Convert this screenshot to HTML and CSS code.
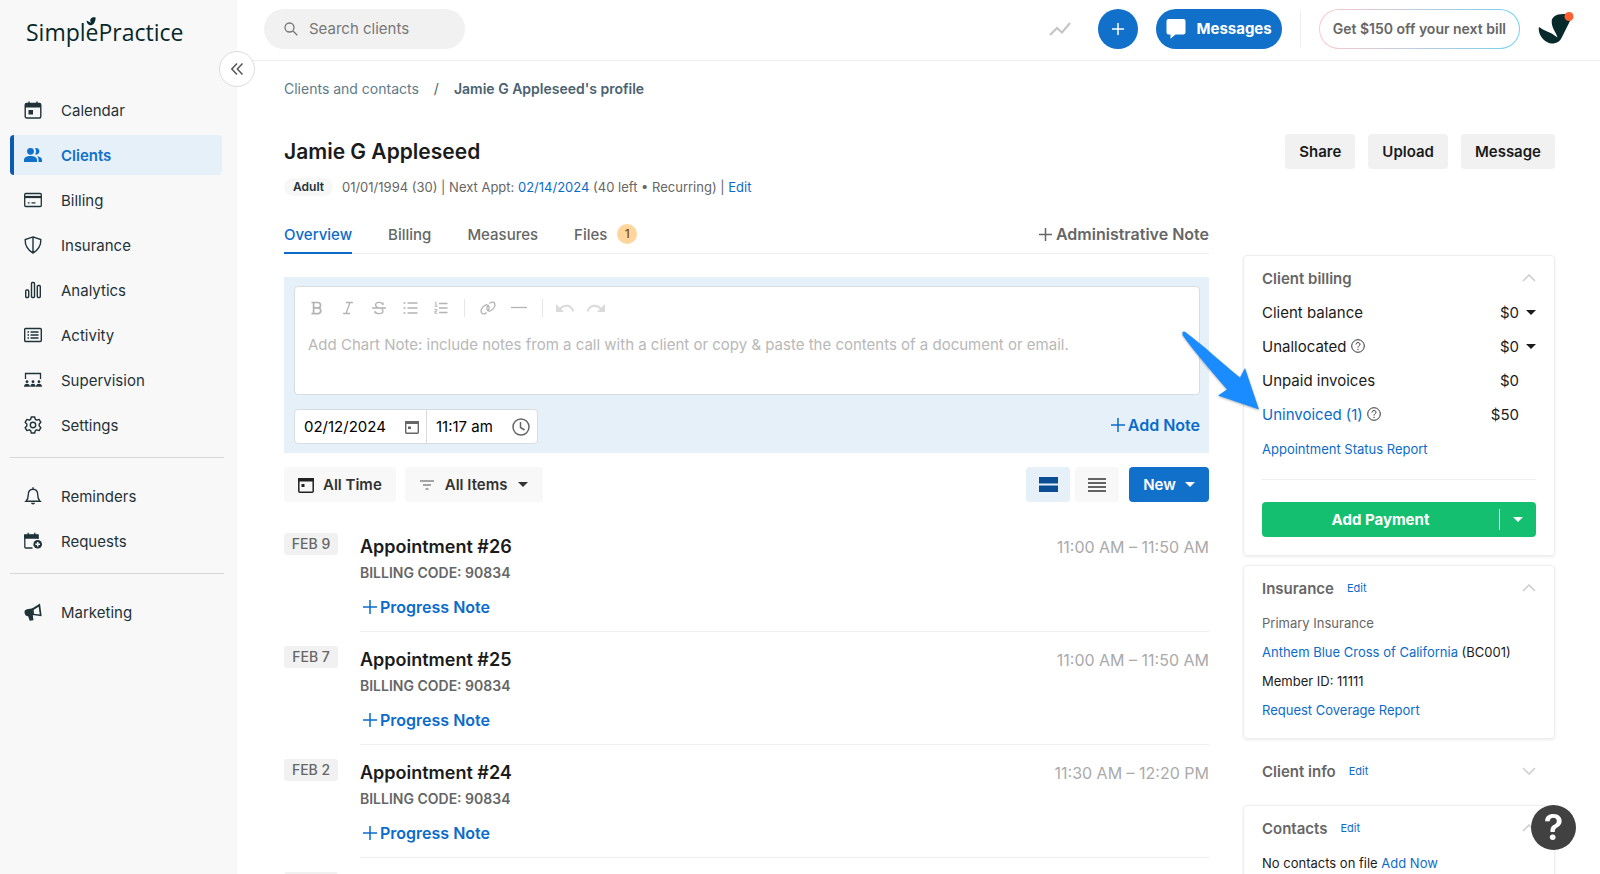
FILE: index.html
```html
<!DOCTYPE html>
<html lang="en">
<head>
<meta charset="utf-8">
<title>Jamie G Appleseed's profile</title>
<link rel="stylesheet" href="styles.css">
</head>
<body>
<div class="app">
  <aside class="sidebar">
    <a class="logo" href="#" aria-label="SimplePractice"><span>SimplePractice</span>
      <svg class="logo-bird" viewBox="0 0 10 11"><path d="M5 1.5C6 .3 8 0 9.6 .5C9.800 4 8 7.500 5.500 8.200C3 8.800 1 7 .5 3.800C2 4.200 4 5 5 6C4 4 4 2.500 5 1.500Z" fill="#06292b"/></svg>
    </a>
    <button class="collapse" aria-label="Collapse menu"><svg width="14" height="14" viewBox="0 0 14 14" fill="none" stroke="#555" stroke-width="1.5"><path d="M7 1.500 1.800 7 7 12.500M12.500 1.500 7.300 7l5.200 5.500"/></svg></button>
    <nav class="nav">
      <a href="#"><svg viewBox="0 0 18 18" fill="none" stroke="currentColor" stroke-width="1.400"><rect x="1.200" y="2.500" width="15.600" height="14.500" rx="1.500"/><path d="M1 3h16v3.500H1z" fill="currentColor" stroke="none"/><path d="M5 .5v3M13 .5v3"/><path d="M4.500 9h4.500v4.500H4.500z" fill="currentColor" stroke="none"/></svg>Calendar</a>
      <a href="#" class="active"><svg viewBox="0 0 18 18" fill="currentColor"><circle cx="6.500" cy="5.300" r="3.400"/><path d="M0 16v-2.200C0 11.300 3 10 6.500 10s6.500 1.300 6.500 3.800V16z"/><path d="M11 2.200a3.300 3.300 0 1 1 0 6.200c1.400-1.800 1.400-4.400 0-6.200zM13 10.200c3 .3 5 1.600 5 3.800v2h-3.500v-2.200c0-1.500-.5-2.700-1.500-3.600z"/></svg>Clients</a>
      <a href="#"><svg viewBox="0 0 18 18" fill="none" stroke="currentColor" stroke-width="1.300"><rect x=".7" y="2.500" width="16.600" height="13" rx="1"/><path d="M1 6h16" stroke-width="2.200"/><path d="M3.800 11.800h1.800M7.500 11.800h4"/></svg>Billing</a>
      <a href="#"><svg viewBox="0 0 18 18" fill="none" stroke="currentColor" stroke-width="1.400"><path d="M9 .9 16.800 3.600C17.200 9 14 14.600 9 17 4 14.600.8 9 1.200 3.600zM9 1v16"/></svg>Insurance</a>
      <a href="#"><svg viewBox="0 0 18 18" fill="none" stroke="currentColor" stroke-width="1.400"><rect x="1.700" y="9" width="3" height="7.500" rx="1"/><rect x="7.500" y="1.500" width="3" height="15" rx="1"/><rect x="13.300" y="4.500" width="3" height="12" rx="1"/></svg>Analytics</a>
      <a href="#"><svg viewBox="0 0 18 18" fill="none" stroke="currentColor" stroke-width="1.400"><rect x=".7" y="2.500" width="16.600" height="13" rx="1"/><path d="M3.500 6h1.500M3.500 9h1.500M3.500 12h1.500M6.500 6h8M6.500 9h8M6.500 12h8"/></svg>Activity</a>
      <a href="#"><svg viewBox="0 0 18 18" fill="currentColor"><path d="M1.500 8V2.500h15V8" fill="none" stroke="currentColor" stroke-width="1.300"/><circle cx="3" cy="10.700" r="1.400"/><circle cx="9" cy="10.700" r="1.400"/><circle cx="15" cy="10.700" r="1.400"/><path d="M0 15.800c0-2 1.200-3 3-3s3 1 3 3zM6.300 15.800c0-2 1-3 2.700-3s2.700 1 2.700 3zM12 15.800c0-2 1.200-3 3-3s3 1 3 3z"/></svg>Supervision</a>
      <a href="#"><svg viewBox="0 0 18 18" fill="none" stroke="currentColor" stroke-width="1.400" stroke-linejoin="round"><path d="M7.300 1h3.400l.6 2.300 1.500.9 2.300-.8 1.800 2.900-1.700 1.700v2l1.700 1.700-1.800 2.900-2.300-.8-1.500.9-.6 2.300H7.300l-.6-2.300-1.500-.9-2.300.8-1.800-2.900L2.800 10V8L1.100 6.300l1.800-2.900 2.300.8 1.500-.9z"/><circle cx="9" cy="9" r="2.700"/></svg>Settings</a>
      <hr>
      <a href="#"><svg viewBox="0 0 18 18" fill="none" stroke="currentColor" stroke-width="1.400"><path d="M2 14.300c1.800-1.600 2.200-3.300 2.200-6C4.200 4.500 6 2.200 9 2.200s4.800 2.300 4.800 6.100c0 2.700.4 4.400 2.200 6zM9 .3v2"/><path d="M7 15.800a2 1.800 0 0 0 4 0z" fill="currentColor" stroke="none"/></svg>Reminders</a>
      <a href="#"><svg viewBox="0 0 18 18" fill="none" stroke="currentColor" stroke-width="1.300"><path d="M8.500 16H2.200Q.8 16 .8 14.700V3.500h13V7"/><path d="M.8 3h13.200v3H.8z" fill="currentColor"/><path d="M4.200.8v3M10.800.8v3"/><circle cx="13.700" cy="12.300" r="4.300" fill="currentColor" stroke="none"/><path d="M13.700 10v4.600M11.400 12.300H16" stroke="#f8f8f8" stroke-width="1.500"/></svg>Requests</a>
      <hr>
      <a href="#"><svg viewBox="0 0 18 18" fill="currentColor"><path d="M8 5.500 16 .5l1.700 12.800L8.500 12zM9.500 7l.4 3.800 5.900.8-1.200-7.900z" fill-rule="evenodd"/><path d="M.5 9.500C.3 8 1.500 6.500 3 6.300l6-1 .8 6.800-1 .2.700 5-3.800.4-1.600-4.500c-2 0-3.300-1.500-3.600-3.700z"/></svg>Marketing</a>
    </nav>
  </aside>

  <div class="page">
    <header class="topbar">
      <label class="search"><svg width="14" height="14" viewBox="0 0 14 14" fill="none" stroke="#777" stroke-width="1.300"><circle cx="5.500" cy="5.500" r="4.500"/><path d="m9 9 4.300 4.300"/></svg><input type="text" placeholder="Search clients" aria-label="Search clients"></label>
      <div class="top-actions">
        <svg class="trend" width="22" height="16" viewBox="0 0 22 16" fill="none" stroke="#c4c4c4" stroke-width="2"><path d="m1 14 7-7 5 4.500L21 2"/></svg>
        <button class="add" aria-label="Create"><svg width="14" height="14" viewBox="0 0 14 14" stroke="#fff" stroke-width="1.500"><path d="M7 1v12M1 7h12"/></svg></button>
        <button class="messages"><svg width="20" height="20" viewBox="0 0 20 20" fill="#fff"><path d="M2.500 0h15Q19.500 0 19.500 2v11.500q0 2-2 2h-8L4.500 19.800v-4.300H2.500q-2 0-2-2V2q0-2 2-2z"/></svg>Messages</button>
        <span class="top-sep"></span>
        <button class="promo">Get $150 off your next bill</button>
        <button class="avatar" aria-label="Account"><svg width="36" height="34" viewBox="0 0 36 34"><path d="M27 2C18 1.500 13.500 5 13.700 10C14 17 18 20 19.500 25.500C13 20 6 19 2 15.500Q.5 14.500 .7 17C1 25 8 31.500 14 31.500C19 31.500 22 29 23.500 26L33 7Z" fill="#06292b"/><circle cx="31" cy="4.500" r="4.500" fill="#ff5f2e"/></svg></button>
      </div>
    </header>

    <main class="content">
      <div class="crumbs"><a href="#">Clients and contacts</a><span>/</span><strong>Jamie G Appleseed's profile</strong></div>
      <div class="heading">
        <h1>Jamie G Appleseed</h1>
        <div class="heading-actions"><button>Share</button><button>Upload</button><button>Message</button></div>
      </div>
      <div class="meta"><span class="pill">Adult</span><span>01/01/1994 (30) | Next Appt: <a href="#">02/14/2024</a> (40 left • Recurring) | <a href="#">Edit</a></span></div>

      <div class="columns">
        <section class="primary">
          <div class="tabs">
            <a href="#" class="on">Overview</a><a href="#">Billing</a><a href="#">Measures</a><a href="#">Files<span class="badge">1</span></a>
            <button class="admin"><svg width="13" height="13" viewBox="0 0 13 13" stroke="currentColor" stroke-width="1.500"><path d="M6.500 0v13M0 6.500h13"/></svg>Administrative Note</button>
          </div>

          <div class="composer">
            <div class="editor">
              <div class="tools">
                <button aria-label="Bold"><svg viewBox="0 0 16 16"><path d="M2.500 2.500h6.300a2.700 2.700 0 0 1 0 5.400H4.500m4.300 0h.6a2.900 2.900 0 0 1 0 5.700H2.500M4.600 2.500v11" stroke-width="1.700"/></svg></button>
                <button aria-label="Italic"><svg viewBox="0 0 16 16"><path d="M6 2.500h7M3 13.500h7M10 2.500l-4 11"/></svg></button>
                <button aria-label="Strikethrough"><svg viewBox="0 0 16 16"><path d="M12 5V2.500M12 4.500C11 1.500 4.500 1.500 4.500 5c0 1.500 1.500 2.300 3.500 3M4 11v2.500M4 11.500c1 3 8 3 8-.5 0-1-.5-2-1.500-2.500M1 8h14"/></svg></button>
                <button aria-label="Bulleted list"><svg viewBox="0 0 16 16"><path d="M1.500 3h2M1.500 8h2M1.500 13h2M5.500 3h10M5.500 8h10M5.500 13h10"/></svg></button>
                <button aria-label="Numbered list"><svg viewBox="0 0 16 16"><path d="M6 3.500h8.500M6 8h8.500M6 12.500h8.500"/><path d="M2 3l1-.8V6M1.500 6.200h3M1.700 9.500h2.200v1.700H1.900v2h2.500" stroke-width="1"/></svg></button>
                <span class="tool-sep"></span>
                <button aria-label="Link"><svg viewBox="0 0 16 16"><path d="M6.500 12.500C4.500 15 1 14 1 11c0-2.500 3.500-6.500 6-6 2.500.4 2.500 3 1.500 5M9.500 3.500C11.500 1 15 2 15 5c0 2.500-3.500 6.500-6 6-2.500-.4-2.500-3-1.500-5"/></svg></button>
                <button aria-label="Horizontal rule"><svg viewBox="0 0 16 16"><path d="M0 7.500h16"/></svg></button>
                <span class="tool-sep"></span>
                <button class="dim" aria-label="Undo"><svg viewBox="0 0 18 16"><path d="M4 9c4-5 11-4.500 13.500 2.500" stroke-width="2"/><path d="M0 4v8h8z" fill="currentColor" stroke="none"/></svg></button>
                <button class="dim" aria-label="Redo"><svg viewBox="0 0 18 16"><path d="M14 9C10 4 3 4.500.5 11.500" stroke-width="2"/><path d="M18 4v8h-8z" fill="currentColor" stroke="none"/></svg></button>
              </div>
              <textarea aria-label="Chart note" rows="3" placeholder="Add Chart Note: include notes from a call with a client or copy &amp; paste the contents of a document or email."></textarea>
            </div>
            <div class="composer-foot">
              <div class="when">
                <label class="date"><input type="text" value="02/12/2024" aria-label="Date"><svg width="14" height="14" viewBox="0 0 14 14"><rect x=".7" y="1.700" width="12.600" height="11.600" rx="1" fill="none" stroke="#666" stroke-width="1.400"/><path d="M0 1h14v3H0zM3 6.500h3v2.500H3z" fill="#666"/></svg></label>
                <label class="time"><input type="text" value="11:17 am" aria-label="Time"><svg width="18" height="18" viewBox="0 0 18 18" fill="none" stroke="#666" stroke-width="1.500"><circle cx="9" cy="9" r="8"/><path d="M8.500 4v5.500l4 2.500"/></svg></label>
              </div>
              <button class="plus-link"><svg width="14" height="14" viewBox="0 0 14 14" stroke="currentColor" stroke-width="1.500"><path d="M7 0v14M0 7h14"/></svg>Add Note</button>
            </div>
          </div>

          <div class="filters">
            <button class="f-time"><svg width="16" height="16" viewBox="0 0 16 16"><rect x=".8" y="1.800" width="14.400" height="13.400" rx="1" fill="none" stroke="#222" stroke-width="1.500"/><path d="M0 1h16v3.500H0zM3.500 7h3v3h-3z" fill="#222"/></svg>All Time</button>
            <button class="f-items"><svg width="14" height="10" viewBox="0 0 14 10" stroke="#888" stroke-width="1.300"><path d="M0 1h14M3 5h8M5.500 9h3"/></svg>All Items<i class="caret"></i></button>
            <button class="view on" aria-label="Expanded view"><svg width="19" height="15" viewBox="0 0 19 15" fill="#0a4d94"><path d="M0 0h19v6.500H0zM0 8.500h19V15H0z"/></svg></button>
            <button class="view" aria-label="Compact view"><svg width="18" height="14" viewBox="0 0 18 14" stroke="#333" stroke-width="1.600"><path d="M0 1h18M0 5h18M0 9h18M0 13h18"/></svg></button>
            <button class="new">New<i class="caret"></i></button>
          </div>

          <ol class="timeline">
            <li><time>FEB 9</time><article><div class="row"><h2>Appointment #26</h2><span>11:00 AM – 11:50 AM</span></div><p>BILLING CODE: 90834</p><button class="plus-link"><svg width="14" height="14" viewBox="0 0 14 14" stroke="currentColor" stroke-width="1.500"><path d="M7 0v14M0 7h14"/></svg>Progress Note</button></article></li>
            <li><time>FEB 7</time><article><div class="row"><h2>Appointment #25</h2><span>11:00 AM – 11:50 AM</span></div><p>BILLING CODE: 90834</p><button class="plus-link"><svg width="14" height="14" viewBox="0 0 14 14" stroke="currentColor" stroke-width="1.500"><path d="M7 0v14M0 7h14"/></svg>Progress Note</button></article></li>
            <li><time>FEB 2</time><article><div class="row"><h2>Appointment #24</h2><span>11:30 AM – 12:20 PM</span></div><p>BILLING CODE: 90834</p><button class="plus-link"><svg width="14" height="14" viewBox="0 0 14 14" stroke="currentColor" stroke-width="1.500"><path d="M7 0v14M0 7h14"/></svg>Progress Note</button></article></li>
            <li><time>&nbsp;</time></li>
          </ol>
        </section>

        <aside class="side">
          <section class="card">
            <header><h3>Client billing</h3><svg class="chev" viewBox="0 0 14 8"><path d="m1 7 6-6 6 6"/></svg></header>
            <dl class="bill">
              <div><dt>Client balance</dt><dd>$0<i class="caret"></i></dd></div>
              <div><dt>Unallocated <svg class="q" viewBox="0 0 14 14"><circle cx="7" cy="7" r="6.300"/><path d="M5 5.500C5 2.800 9 3 9 5.300 9 6.700 7 6.700 7 8.500M7 9.800V11"/></svg></dt><dd>$0<i class="caret"></i></dd></div>
              <div><dt>Unpaid invoices</dt><dd>$0</dd></div>
              <div><dt><a href="#">Uninvoiced (1)</a> <svg class="q" viewBox="0 0 14 14"><circle cx="7" cy="7" r="6.300"/><path d="M5 5.500C5 2.800 9 3 9 5.300 9 6.700 7 6.700 7 8.500M7 9.800V11"/></svg></dt><dd>$50</dd></div>
            </dl>
            <a class="report" href="#">Appointment Status Report</a>
            <div class="pay"><button class="pay-main">Add Payment</button><button class="pay-more" aria-label="More payment options"><i class="caret"></i></button></div>
          </section>

          <section class="card insurance">
            <header><h3>Insurance</h3><a href="#">Edit</a><svg class="chev" viewBox="0 0 14 8"><path d="m1 7 6-6 6 6"/></svg></header>
            <p class="muted">Primary Insurance</p>
            <p><a href="#">Anthem Blue Cross of California</a> (BC001)</p>
            <p>Member ID: 11111</p>
            <p><a href="#">Request Coverage Report</a></p>
          </section>

          <section class="flat">
            <header><h3>Client info</h3><a href="#">Edit</a><svg class="chev" viewBox="0 0 14 8"><path d="m1 1 6 6 6-6"/></svg></header>
          </section>

          <section class="card contacts">
            <header><h3>Contacts</h3><a href="#">Edit</a><svg class="chev" viewBox="0 0 14 8"><path d="m1 7 6-6 6 6"/></svg></header>
            <p>No contacts on file <a href="#">Add Now</a></p>
          </section>
          <svg class="pointer" width="84" height="84" viewBox="0 0 84 84"><path d="M2.500 2C3.500 1 5 1.500 6 2.500C24 16 42 33 60 47.500L65 38 79 79.500 38 65.500 47 59.500C32 42 13 20 2.500 5Z" fill="#1a8cff"/></svg>
        </aside>
      </div>
    </main>
  </div>
  <button class="help" aria-label="Help">?</button>
</div>
</body>
</html>
```

FILE: styles.css
```css
* { box-sizing: border-box; }
body { margin: 0; font-family: Inter, "Liberation Sans", sans-serif; font-size: 15px; color: #1b1b1b; background: #fff; }
button, input, textarea { font: inherit; color: inherit; border: 0; background: none; padding: 0; margin: 0; }
a { color: #0b6bcb; text-decoration: none; }
h1, h2, h3, p, dl, dd, ol { margin: 0; padding: 0; }
.app { display: flex; height: 100vh; overflow: hidden; }

.sidebar { position: relative; flex: none; width: 237px; background: #f8f8f8; padding: 14px 10px; }
.logo { display: block; position: relative; margin-left: 16px; height: 36px; line-height: 36px; font-family: "Open Sans", sans-serif; font-size: 23px; color: #06292b; }
.logo-bird { position: absolute; left: 60px; top: 3px; width: 10px; height: 11px; }
.collapse { position: absolute; z-index: 2; right: -18px; top: 51px; width: 36px; height: 36px; border: 1px solid #dcdcdc; border-radius: 50%; background: #fff; display: flex; align-items: center; justify-content: center; }
.nav { display: flex; flex-direction: column; gap: 5px; margin-top: 40px; }
.nav a { display: flex; align-items: center; gap: 18px; height: 40px; padding-left: 14px; color: #1f3338; border-radius: 4px; margin-right: 5px; }
.nav svg { width: 18px; height: 18px; margin-right: 1px; }
.nav .active { background: #e6f0f9; color: #1170c9; font-weight: 600; padding-left: 10px; border-left: 4px solid #0b5cb0; }
.nav hr { width: 214px; border: 0; border-top: 1px solid #d8d8d8; margin: 7px 0 13px; }

.page { flex: 1; min-width: 0; }
.topbar { display: flex; justify-content: space-between; align-items: center; height: 61px; padding: 0 26px 3px 27px; border-bottom: 1px solid #eee; }
.search { display: flex; align-items: center; gap: 11px; width: 201px; height: 40px; padding-left: 20px; border-radius: 20px; background: #f1f1f1; }
.search input { flex: 1; min-width: 0; outline: 0; }
.search input::placeholder { color: #777; }
.top-actions { display: flex; align-items: center; }
.trend { margin-right: 27px; }
.add { width: 40px; height: 40px; border-radius: 50%; background: #1170c9; display: flex; align-items: center; justify-content: center; margin-right: 18px; }
.messages { display: flex; align-items: center; gap: 10px; height: 40px; padding: 0 10px; border-radius: 20px; background: #1170c9; color: #fff; font-weight: 700; }
.top-sep { width: 1px; height: 36px; background: #eee; margin: 0 18px; }
.promo { height: 40px; padding: 0 13px; border: 1px solid transparent; border-radius: 20px; font-size: 14px; font-weight: 600; color: #666; background: linear-gradient(#fff, #fff) padding-box, linear-gradient(90deg, #ffc9cc, #74d0f0) border-box; }
.avatar { display: flex; margin-left: 18px; }

.content { padding: 18px 45px 0 47px; }
.crumbs { display: flex; gap: 15px; font-size: 14px; line-height: 20px; color: #4a6270; }
.crumbs a { color: #607a88; }
.crumbs strong { font-weight: 600; }
.heading { display: flex; justify-content: space-between; align-items: center; margin-top: 35px; height: 35px; }
h1 { font-size: 21px; font-weight: 600; }
.heading-actions { display: flex; gap: 13px; }
.heading-actions button { height: 35px; padding: 0 14px; border-radius: 4px; background: #f1f1f1; font-weight: 600; }
.meta { display: flex; gap: 9px; align-items: center; margin-top: 9px; height: 18px; font-size: 13px; color: #666; }
.pill { padding: 0 9px; line-height: 18px; border-radius: 9px; background: #f7f7f7; color: #1f3338; font-weight: 600; font-size: 12px; }

.columns { display: flex; gap: 34px; margin-top: 20px; }
.primary { flex: 1; min-width: 0; }
.tabs { display: flex; align-items: flex-start; gap: 36px; height: 38px; border-bottom: 1px solid #eee; }
.tabs a { display: flex; align-items: center; height: 38px; padding-bottom: 2px; color: #666; font-weight: 500; }
.tabs .on { color: #0b6bcb; border-bottom: 2px solid #0b6bcb; padding-bottom: 0; }
.badge { width: 20px; height: 20px; margin-left: 10px; border-radius: 50%; background: #ffd59b; color: #7a4a10; font-size: 12px; line-height: 20px; text-align: center; }
.admin { display: flex; align-items: center; gap: 4px; height: 36px; margin-left: auto; font-size: 16px; font-weight: 600; color: #666; }

.composer { margin-top: 23px; padding: 9px 9px 9px 10px; background: #e6f0f9; }
.editor { border: 1px solid #d9dcdf; border-radius: 4px; background: #fff; padding: 8px 13px 0; height: 109px; }
.tools { display: flex; align-items: center; gap: 15px; height: 26px; color: #b3b3b3; padding-left: 1px; }
.tools button { width: 16px; height: 16px; display: flex; }
.tools .dim { width: 18px; color: #dadada; margin-left: -2px; }
.tools svg { width: 100%; height: 16px; fill: none; stroke: currentColor; stroke-width: 1.3; }
.tool-sep { width: 1px; height: 18px; background: #e6e6e6; }
.editor textarea { display: block; width: 100%; margin-top: 14px; line-height: 20px; resize: none; outline: 0; height: 50px; overflow: hidden; }
.editor textarea::placeholder { color: #b8b8b8; }
.composer-foot { display: flex; justify-content: space-between; align-items: flex-start; margin-top: 14px; }
.when { display: flex; height: 35px; border: 1px solid #d9dcdf; border-radius: 4px; background: #fff; color: #000; }
.when label { display: flex; align-items: center; justify-content: space-between; padding: 0 7px 0 9px; }
.when input { width: 84px; }
.date { width: 132px; border-right: 1px solid #d9dcdf; }
.time { width: 110px; }
.time input { width: 68px; }
.plus-link { display: flex; align-items: center; gap: 3px; font-size: 16px; font-weight: 600; color: #0b6bcb; }
.composer .plus-link { height: 32px; }

.filters { display: flex; align-items: center; margin-top: 14px; }
.filters button { display: flex; align-items: center; justify-content: center; height: 35px; border-radius: 4px; background: #f8f8f8; font-weight: 600; color: #333; }
.filters .f-time { gap: 9px; padding: 0 14px; margin-right: 9px; }
.filters .f-items { gap: 11px; padding: 0 15px; margin-right: auto; }
.filters .view { width: 44px; margin-right: 5px; }
.filters .view.on { background: #e6f0f9; }
.filters .new { width: 80px; gap: 9px; margin-left: 5px; background: #1170c9; color: #fff; }
.caret { border: 5px solid transparent; border-top-color: currentColor; border-bottom: 0; }

.timeline { list-style: none; margin-top: 31px; }
.timeline li { display: flex; align-items: flex-start; gap: 22px; height: 113px; }
.timeline time { width: 54px; line-height: 22px; border-radius: 3px; background: #f1f1f1; color: #666; font-size: 14px; font-weight: 500; text-align: center; }
.timeline article { flex: 1; height: 99px; border-bottom: 1px solid #eee; padding-top: 2px; }
.row { display: flex; justify-content: space-between; line-height: 24px; font-size: 16px; color: #aaa; }
.row h2 { font-size: 18px; font-weight: 600; color: #1b1b1b; }
.timeline p { margin-top: 4px; font-size: 14px; font-weight: 600; line-height: 20px; color: #666; }
.timeline .plus-link { margin: 14px 0 0 3px; line-height: 20px; }

.side { position: relative; flex: none; width: 312px; padding-top: 39px; }
.card { padding: 12px 18px 18px; border: 1px solid #eee; border-radius: 4px; box-shadow: 0 1px 3px rgba(0,0,0,.08); font-size: 13px; }
.side header { display: flex; align-items: center; gap: 13px; height: 20px; font-size: 11px; }
.side h3 { font-size: 15px; font-weight: 600; color: #666; }
.chev { width: 14px; height: 8px; margin-left: auto; fill: none; stroke: #ccc; stroke-width: 1.5; }
.bill { margin-top: 7px; font-size: 15px; }
.bill div { display: flex; justify-content: space-between; align-items: center; height: 34px; }
.bill dt { display: flex; align-items: center; gap: 4px; }
.bill dd { display: grid; grid-template-columns: auto 10px; gap: 7px; align-items: center; }
.q { width: 14px; height: 14px; fill: none; stroke: #333; stroke-width: 1; }
.report { display: block; margin-top: 8px; padding-bottom: 20px; line-height: 20px; border-bottom: 1px solid #eee; }
.pay { display: flex; height: 35px; margin-top: 22px; border-radius: 4px; background: #14c070; color: #fff; }
.pay-main { flex: 1; font-size: 15px; font-weight: 700; }
.pay-more { display: flex; align-items: center; justify-content: center; width: 37px; margin: 7px 0; border-left: 1px solid #fff; }
.insurance { margin-top: 9px; }
.insurance p { line-height: 20px; margin-top: 9px; }
.insurance header + p { margin-top: 15px; }
.muted { color: #666; }
.flat { padding: 22px 19px 24px; }
.contacts p { margin-top: 15px; line-height: 20px; }
.pointer { position: absolute; left: -63px; top: 114px; filter: drop-shadow(0 1px 1px rgba(0,0,0,.3)); }
.help { position: fixed; right: 24px; bottom: 24px; width: 45px; height: 45px; border-radius: 50%; background: #414141; color: #fff; font-size: 36px; font-weight: 600; line-height: 45px; text-align: center; }
```
